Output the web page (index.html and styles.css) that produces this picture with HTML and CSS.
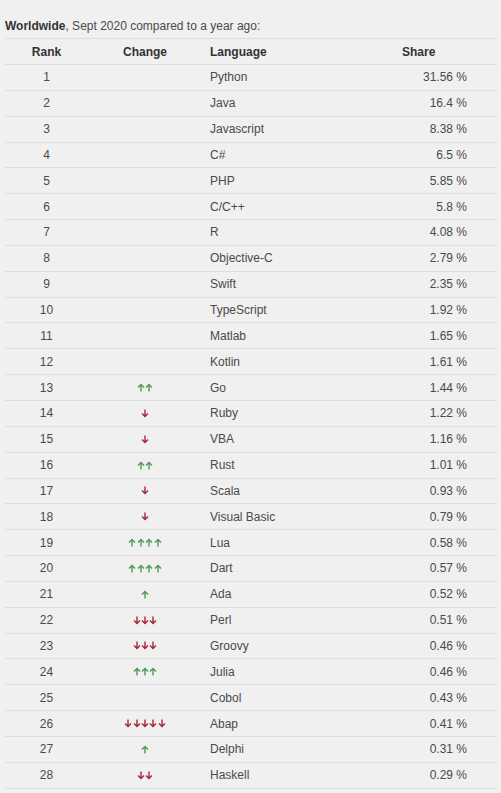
FILE: index.html
```html
<!DOCTYPE html>
<html>
<head>
<meta charset="utf-8">
<link rel="stylesheet" href="styles.css">
</head>
<body>
<svg width="0" height="0" class="defs">
  <defs>
    <g id="up"><path d="M4 8.5V1.5M1 4.5L4 1.5L7 4.5" fill="none" stroke-width="1.4"/></g>
    <g id="down"><path d="M4 0.5V7.5M1 4.5L4 7.5L7 4.5" fill="none" stroke-width="1.4"/></g>
  </defs>
</svg>
<p class="title"><b>Worldwide</b>, Sept 2020 compared to a year ago:</p>
<table class="rank-table">
  <thead>
    <tr><th class="c-rank">Rank</th><th class="c-change">Change</th><th class="c-lang">Language</th><th class="c-share">Share</th></tr>
  </thead>
  <tbody id="rows"></tbody>
</table>
<script>
var data = [
  [1,"","Python","31.56 %"],[2,"","Java","16.4 %"],[3,"","Javascript","8.38 %"],[4,"","C#","6.5 %"],
  [5,"","PHP","5.85 %"],[6,"","C/C++","5.8 %"],[7,"","R","4.08 %"],[8,"","Objective-C","2.79 %"],
  [9,"","Swift","2.35 %"],[10,"","TypeScript","1.92 %"],[11,"","Matlab","1.65 %"],[12,"","Kotlin","1.61 %"],
  [13,"uu","Go","1.44 %"],[14,"d","Ruby","1.22 %"],[15,"d","VBA","1.16 %"],[16,"uu","Rust","1.01 %"],
  [17,"d","Scala","0.93 %"],[18,"d","Visual Basic","0.79 %"],[19,"uuuu","Lua","0.58 %"],[20,"uuuu","Dart","0.57 %"],
  [21,"u","Ada","0.52 %"],[22,"ddd","Perl","0.51 %"],[23,"ddd","Groovy","0.46 %"],[24,"uuu","Julia","0.46 %"],
  [25,"","Cobol","0.43 %"],[26,"ddddd","Abap","0.41 %"],[27,"u","Delphi","0.31 %"],[28,"dd","Haskell","0.29 %"]
];
var html = "";
data.forEach(function(r){
  var arrows = "";
  for (var i=0;i<r[1].length;i++){
    var u = r[1][i]==="u";
    arrows += '<svg class="arrow '+(u?"up":"down")+'" width="8" height="9" viewBox="0 0 8 9"><use href="#'+(u?"up":"down")+'"/></svg>';
  }
  html += '<tr><td class="c-rank">'+r[0]+'</td><td class="c-change">'+arrows+'</td><td class="c-lang">'+r[2]+'</td><td class="c-share">'+r[3]+'</td></tr>';
});
document.getElementById("rows").innerHTML = html;
</script>
</body>
</html>
```
FILE: styles.css
```css
html, body {
  margin: 0;
  padding: 0;
  background: #f0f0f0;
}
body {
  font-family: "Liberation Sans", Arial, sans-serif;
  font-size: 12px;
  color: #4a4a4a;
}
.defs {
  position: absolute;
}
.title {
  margin: 0;
  padding: 19px 0 0 5px;
  height: 19px;
  line-height: 14px;
  color: #4a4a4a;
}
.title b {
  color: #333;
}
.rank-table {
  margin-left: 5px;
  width: 492px;
  border-collapse: collapse;
  table-layout: fixed;
}
.rank-table th, .rank-table td {
  height: 25.85px;
  padding: 0;
  border-top: 1px solid #dddddd;
  box-sizing: border-box;
  vertical-align: middle;
  white-space: nowrap;
}
.rank-table tr:last-child td {
  border-bottom: 1px solid #dddddd;
}
.rank-table th {
  font-weight: bold;
  color: #333;
  height: 26px;
}
.c-rank {
  width: 83px;
  text-align: center;
}
.c-change {
  width: 114px;
  text-align: center;
  font-size: 0;
}
th.c-change {
  font-size: 12px;
}
.c-lang {
  width: 192px;
  text-align: left;
  padding-left: 8px !important;
}
td.c-share {
  text-align: right;
  padding-right: 30px !important;
}
th.c-share {
  text-align: left;
  padding-left: 8px !important;
}
.arrow {
  display: inline-block;
  vertical-align: middle;
  margin: 0 0.2px;
}
.arrow.up {
  stroke: #4f9a55;
}
.arrow.down {
  stroke: #a8263a;
}
```
